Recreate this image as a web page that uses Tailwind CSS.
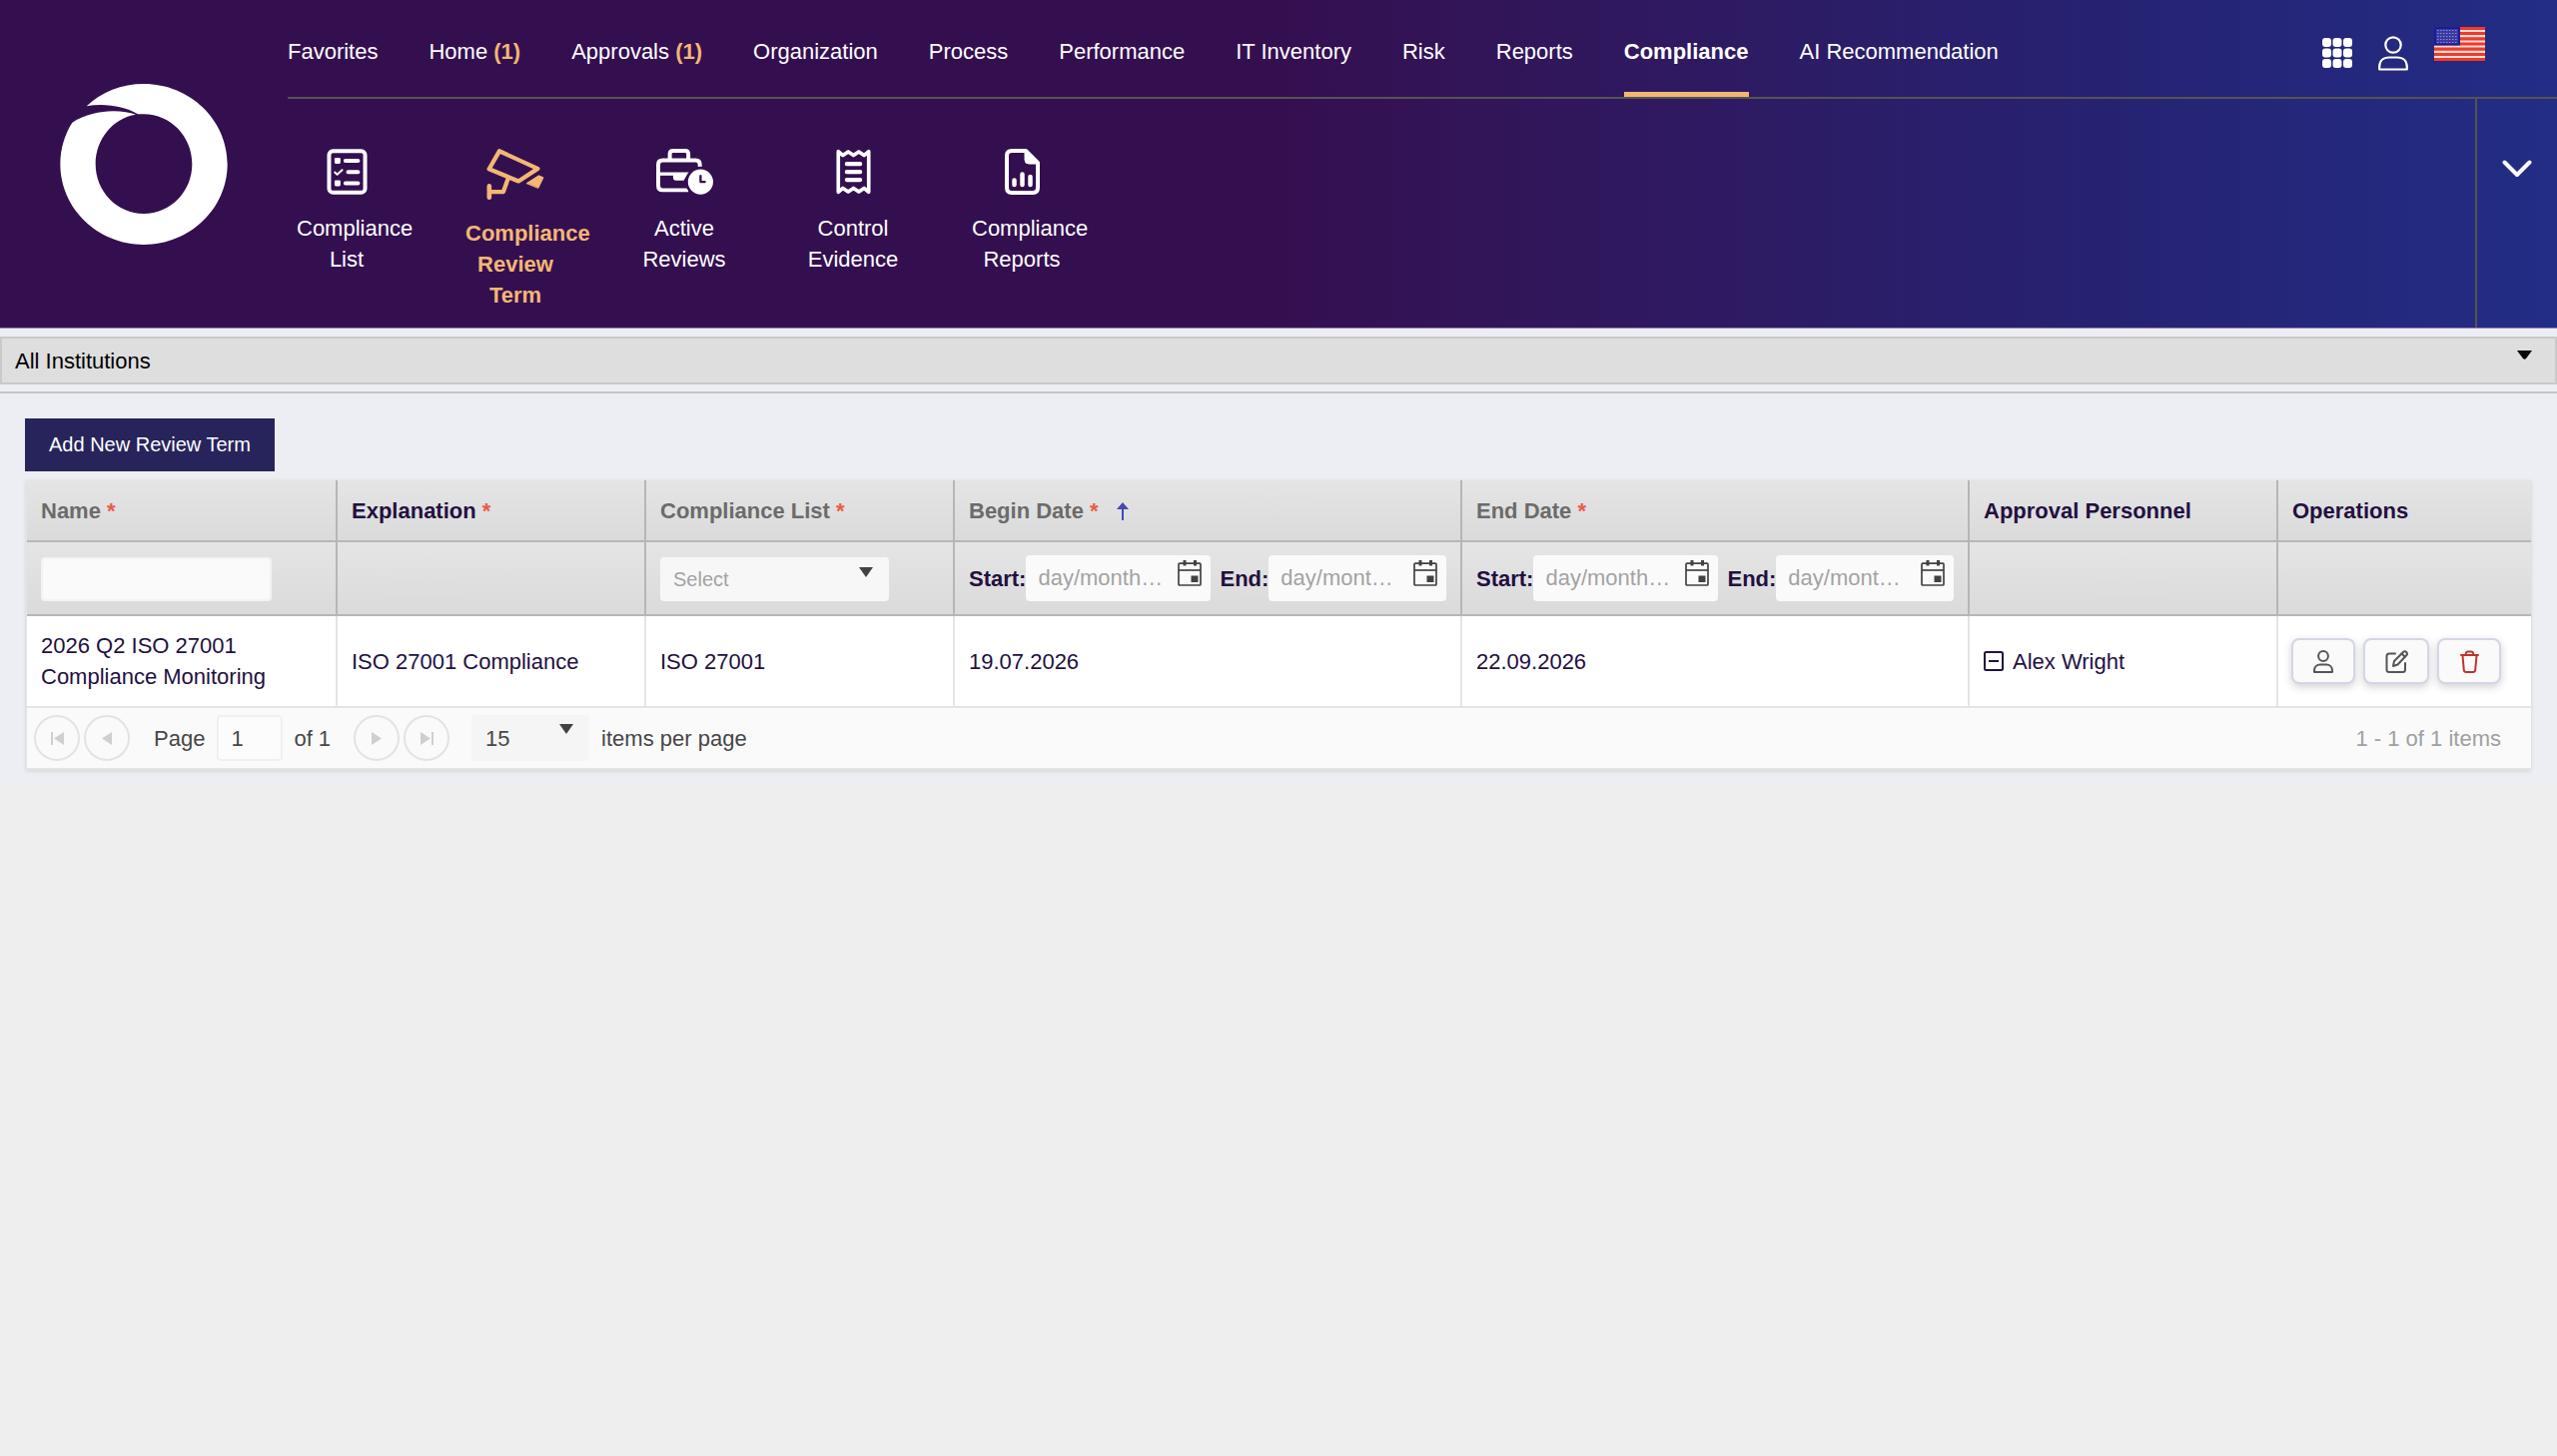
<!DOCTYPE html>
<html lang="en">
  <head>
    <meta charset="UTF-8" />
    <meta name="viewport" content="width=device-width, initial-scale=1.0" />
    <title>Compliance Review Term</title>
    <script src="https://cdn.jsdelivr.net/npm/@tailwindcss/browser@4"></script>
  </head>
  <body class="min-h-screen bg-[#eeeeee] font-['Liberation_Sans',Arial,sans-serif] text-[22px] leading-[31px] text-[#23103f]">
    <!-- Header -->
    <header class="flex border-b border-[#9583b5] bg-linear-to-r from-[#340f50] from-50% via-[#262272] via-82% to-[#222d85] text-white">
      <a href="#" aria-label="Dashboard" class="flex w-72 shrink-0 items-center justify-center">
        <svg class="h-[161px] w-[168px]" viewBox="31 26 502 483" fill="#fff">
          <path d="M110 93C155 50 215 26 282 26C420 26 533 134 533 267C533 401 420 509 282 509C144 509 31 401 31 267C31 222 44 178 67 142C105 118 150 108 190 108C218 108 240 112 258 118C190 128 137 192 137 267C137 350 202 416 282 416C362 416 427 350 427 267C427 184 362 117 282 117L264 117C225 94 165 83 110 93Z" />
        </svg>
      </a>
      <div class="min-w-0 grow">
        <!-- Top navigation -->
        <div class="flex h-[99px] justify-between border-b-2 border-[#55544f]">
          <nav class="flex gap-[51px] whitespace-nowrap">
            <a href="#" class="pt-9">Favorites</a>
            <a href="#" class="pt-9">Home <b class="text-[#f3b774]">(1)</b></a>
            <a href="#" class="pt-9">Approvals <b class="text-[#f3b774]">(1)</b></a>
            <a href="#" class="pt-9">Organization</a>
            <a href="#" class="pt-9">Process</a>
            <a href="#" class="pt-9">Performance</a>
            <a href="#" class="pt-9">IT Inventory</a>
            <a href="#" class="pt-9">Risk</a>
            <a href="#" class="pt-9">Reports</a>
            <a href="#" class="border-b-5 border-[#f3b774] pt-9 font-bold">Compliance</a>
            <a href="#" class="pt-9">AI Recommendation</a>
          </nav>
          <div class="flex items-start gap-[26px] pt-[27px] pr-[72px]">
            <button type="button" aria-label="Applications" class="mt-[11px]">
              <svg class="size-[30px]" viewBox="0 0 30 30" fill="#fff">
                <rect x="0" y="0" width="9" height="9" rx="3" />
                <rect x="10.500" y="0" width="9" height="9" rx="3" />
                <rect x="21" y="0" width="9" height="9" rx="3" />
                <rect x="0" y="10.500" width="9" height="9" rx="3" />
                <rect x="10.500" y="10.500" width="9" height="9" rx="3" />
                <rect x="21" y="10.500" width="9" height="9" rx="3" />
                <rect x="0" y="21" width="9" height="9" rx="3" />
                <rect x="10.500" y="21" width="9" height="9" rx="3" />
                <rect x="21" y="21" width="9" height="9" rx="3" />
              </svg>
            </button>
            <button type="button" aria-label="Profile" class="mt-[9px]">
              <svg class="h-[35px] w-[30px]" viewBox="0 0 30 35" fill="none" stroke="#fff" stroke-width="2.2">
                <circle cx="15" cy="9" r="7.700" />
                <path d="M1.200 33.500V31C1.200 25 5 21.500 11 21.500H19C25 21.500 28.800 25 28.800 31V33.500Z" stroke-linejoin="round" />
              </svg>
            </button>
            <button type="button" aria-label="Language">
              <svg class="h-[34px] w-[51px]" viewBox="0 0 51 34">
                <rect width="51" height="34" fill="#fbdcd6" />
                <path d="M0 1.300H51M0 6.500H51M0 11.800H51M0 17H51M0 22.200H51M0 27.500H51M0 32.700H51" stroke="#ee3a2b" stroke-width="3.200" />
                <rect width="26" height="18.500" fill="#1c1c96" />
                <rect x="2" y="2" width="22" height="14.500" fill="#3a3aa4" />
                <path d="M3 3.500H24M3 6.500H24M3 9.500H24M3 12.500H24M3 15.500H24" stroke="#8a8acd" stroke-width="1.200" stroke-dasharray="1.500 1.500" />
              </svg>
            </button>
          </div>
        </div>
        <!-- Module menu -->
        <div class="flex">
          <nav class="flex grow gap-[69px] pt-[50px] pb-[17px] pl-[9px] text-center">
            <a href="#" class="flex w-[100px] flex-col items-center gap-[18px]">
              <svg class="h-[46px] w-[41px]" viewBox="140 57 122 139" fill="none" stroke="#fff" stroke-linecap="round" stroke-linejoin="round">
                <rect x="146.500" y="63.500" width="109" height="126" rx="12" stroke-width="12" />
                <path d="M196 93H234M204 127H234M196 161H234" stroke-width="12" />
                <path d="M164 128L171 135L186 121" stroke-width="6" />
                <rect x="163" y="84" width="18" height="18" rx="4" fill="#fff" stroke="none" />
                <rect x="163" y="152" width="18" height="18" rx="4" fill="#fff" stroke="none" />
              </svg>
              <span class="w-full text-left"><span class="block">Compliance</span><span class="block text-center">List</span></span>
            </a>
            <a href="#" class="flex w-[100px] flex-col items-center gap-[18px] font-bold text-[#f3b774]">
              <svg class="h-[51px] w-[58px]" viewBox="623 57 173 154" fill="none" stroke="#f3b774" stroke-linecap="round" stroke-linejoin="round">
                <path d="M661 64L777 117L719 155L630 118Z" stroke-width="13" />
                <path d="M687 148L673 187H632" stroke-width="13" />
                <path d="M630.500 170V204" stroke-width="14" />
                <path d="M744 161L780 138L794 144L779 175Z" fill="#f3b774" stroke-width="3" />
              </svg>
              <span class="w-full text-left"><span class="block">Compliance</span><span class="block text-center">Review<br />Term</span></span>
            </a>
            <a href="#" class="flex w-[100px] flex-col items-center gap-[18px]">
              <svg class="h-[46px] w-[57px]" viewBox="231 57 172 139" fill="none" stroke="#fff">
                <path d="M328 182H250Q237 182 237 169V105Q237 92 250 92H350Q363 92 363 105V112" stroke-width="12" />
                <path d="M272 92V73Q272 63 282 63H318Q328 63 328 73V92" stroke-width="12" />
                <path d="M237 133H330" stroke-width="10" />
                <path d="M282 134H325L314 153H291Q282 153 282 145Z" fill="#fff" stroke="none" />
                <circle cx="365" cy="157" r="42" fill="#fff" stroke="#340f50" stroke-width="8" />
                <path d="M365 139V157H378" stroke="#340f50" stroke-width="7" stroke-linecap="round" stroke-linejoin="round" />
              </svg>
              <span>Active<br />Reviews</span>
            </a>
            <a href="#" class="flex w-[100px] flex-col items-center gap-[18px]">
              <svg class="h-[46px] w-[35px]" viewBox="773 57 104 139" fill="none" stroke="#fff" stroke-linecap="round" stroke-linejoin="round">
                <path d="M779 65L793 77L809 66L825 77L841 66L857 77L871 65V188L857 176L841 187L825 176L809 187L793 176L779 188Z" stroke-width="11" />
                <path d="M805 103H845M805 127H845M805 151H845" stroke-width="13" />
              </svg>
              <span>Control<br />Evidence</span>
            </a>
            <a href="#" class="flex w-[100px] flex-col items-center gap-[18px]">
              <svg class="h-[46px] w-[35px]" viewBox="0 0 35 46" fill="none" stroke="#fff" stroke-linecap="round" stroke-linejoin="round">
                <path d="M7 2H21L33 14V39Q33 44 28 44H7Q2 44 2 39V7Q2 2 7 2Z" stroke-width="4" />
                <path d="M20 2V11Q20 15 24 15H33L21 2Z" fill="#fff" />
                <path d="M9.500 31.500V36M17.500 25.500V36M25.500 28V36" stroke-width="4.500" />
              </svg>
              <span class="w-full text-left"><span class="block">Compliance</span><span class="block text-center">Reports</span></span>
            </a>
          </nav>
          <button type="button" aria-label="Expand menu" class="flex w-[82px] shrink-0 justify-center border-l-2 border-[#55544f] pt-[60px]">
            <svg class="h-[19px] w-[30px]" viewBox="0 0 30 19" fill="none" stroke="#fff" stroke-width="4" stroke-linecap="round" stroke-linejoin="round">
              <path d="M2.500 3.500L15 16L27.500 3.500" />
            </svg>
          </button>
        </div>
      </div>
    </header>

    <main class="bg-[#edeef3] pt-2 pb-4">
      <!-- Institution filter -->
      <div class="border-b-2 border-[#c4c4c6] pb-[7px]">
        <div class="relative">
          <select aria-label="Institution" class="block h-12 w-full appearance-none border-2 border-[#c9c9c9] bg-[#dedede] px-[13px] text-black">
            <option>All Institutions</option>
          </select>
          <svg class="pointer-events-none absolute top-[14px] right-[25px] h-[9px] w-[15px]" viewBox="0 0 15 9"><path d="M0 0H15L9 8Q7.500 9.500 6 8Z" /></svg>
        </div>
      </div>

      <div class="px-[25px] pt-[25px]">
        <button type="button" class="h-[53px] bg-[#27245b] px-6 text-[20px] text-white">Add New Review Term</button>

        <!-- Review term grid -->
        <div class="mt-[9px] mr-px ml-px border-l border-[#e4e4e4] shadow-[0_1px_4px_rgba(0,0,0,0.12)]">
          <table class="w-full table-fixed border-separate border-spacing-0 bg-white text-left">
            <colgroup>
              <col class="w-[311px]" />
              <col class="w-[309px]" />
              <col class="w-[309px]" />
              <col class="w-[508px]" />
              <col class="w-[508px]" />
              <col class="w-[309px]" />
              <col />
            </colgroup>
            <thead>
              <tr class="bg-linear-to-b from-[#e5e5e5] to-[#dadada]">
                <th class="border-r-2 border-b-2 border-[#b6b6b6] px-[14px] pt-[15px] pb-[14px] text-[#6b6b6b]">Name <span class="text-[#ea5a47]">*</span></th>
                <th class="border-r-2 border-b-2 border-[#b6b6b6] px-[14px] pt-[15px] pb-[14px]">Explanation <span class="text-[#ea5a47]">*</span></th>
                <th class="border-r-2 border-b-2 border-[#b6b6b6] px-[14px] pt-[15px] pb-[14px] text-[#6b6b6b]">Compliance List <span class="text-[#ea5a47]">*</span></th>
                <th class="border-r-2 border-b-2 border-[#b6b6b6] px-[14px] pt-[15px] pb-[14px] text-[#6b6b6b]">
                  <div class="flex items-center gap-[18px]">
                    <span>Begin Date <span class="text-[#ea5a47]">*</span></span>
                    <svg class="h-[18px] w-[12px]" viewBox="0 0 12 18" fill="#4649b0"><path d="M6 0L12 7H7V18H5V7H0Z" /></svg>
                  </div>
                </th>
                <th class="border-r-2 border-b-2 border-[#b6b6b6] px-[14px] pt-[15px] pb-[14px] text-[#6b6b6b]">End Date <span class="text-[#ea5a47]">*</span></th>
                <th class="border-r-2 border-b-2 border-[#b6b6b6] px-[14px] pt-[15px] pb-[14px]">Approval Personnel</th>
                <th class="border-b-2 border-[#b6b6b6] px-[14px] pt-[15px] pb-[14px]">Operations</th>
              </tr>
              <tr class="bg-linear-to-b from-[#e5e5e5] to-[#dadada]">
                <td class="border-r-2 border-b-2 border-[#b6b6b6] px-[14px] py-[13px] align-bottom">
                  <input type="text" aria-label="Name" class="block h-11 w-[231px] rounded-sm border-2 border-[#f3f3f3] bg-[#fafafa] px-3" />
                </td>
                <td class="border-r-2 border-b-2 border-[#b6b6b6]"></td>
                <td class="border-r-2 border-b-2 border-[#b6b6b6] px-[14px] py-[13px] align-bottom">
                  <div class="relative w-[229px]">
                    <select aria-label="Compliance list" class="block h-11 w-full appearance-none rounded-sm bg-[#f7f7f7] px-[13px] text-[20px] text-[#a3a3a3]">
                      <option>Select</option>
                    </select>
                    <svg class="pointer-events-none absolute top-[10px] right-4 h-[10px] w-[14px]" viewBox="0 0 14 10" fill="#424242"><path d="M0 0H14L7 10Z" /></svg>
                  </div>
                </td>
                <td class="border-r-2 border-b-2 border-[#b6b6b6] px-[14px] py-[13px] align-bottom">
                  <div class="flex items-center">
                    <label for="beginStart" class="font-bold">Start:</label>
                    <div class="relative mr-[9px] w-[185px] shrink-0">
                      <input id="beginStart" type="text" placeholder="day/month…" class="block h-[46px] w-full rounded-sm bg-[#fafafa] pr-11 pl-3 placeholder:text-[#a3a3a3]" />
                      <svg class="pointer-events-none absolute top-[5px] right-[9px] h-[26px] w-6" viewBox="0 0 24 26" fill="none" stroke="#424242" stroke-width="1.700"><rect x="1" y="3.200" width="22" height="21.800" rx="1" /><path d="M1 10H23" /><path d="M7 0V5.500M17.500 0V5.500" stroke-width="3" /><rect x="13.500" y="15.500" width="7" height="6.500" fill="#424242" stroke="none" /></svg>
                    </div>
                    <label for="beginEnd" class="font-bold">End:</label>
                    <div class="relative min-w-0 flex-1">
                      <input id="beginEnd" type="text" placeholder="day/mont…" class="block h-[46px] w-full rounded-sm bg-[#fafafa] pr-11 pl-3 placeholder:text-[#a3a3a3]" />
                      <svg class="pointer-events-none absolute top-[5px] right-[9px] h-[26px] w-6" viewBox="0 0 24 26" fill="none" stroke="#424242" stroke-width="1.700"><rect x="1" y="3.200" width="22" height="21.800" rx="1" /><path d="M1 10H23" /><path d="M7 0V5.500M17.500 0V5.500" stroke-width="3" /><rect x="13.500" y="15.500" width="7" height="6.500" fill="#424242" stroke="none" /></svg>
                    </div>
                  </div>
                </td>
                <td class="border-r-2 border-b-2 border-[#b6b6b6] px-[14px] py-[13px] align-bottom">
                  <div class="flex items-center">
                    <label for="endStart" class="font-bold">Start:</label>
                    <div class="relative mr-[9px] w-[185px] shrink-0">
                      <input id="endStart" type="text" placeholder="day/month…" class="block h-[46px] w-full rounded-sm bg-[#fafafa] pr-11 pl-3 placeholder:text-[#a3a3a3]" />
                      <svg class="pointer-events-none absolute top-[5px] right-[9px] h-[26px] w-6" viewBox="0 0 24 26" fill="none" stroke="#424242" stroke-width="1.700"><rect x="1" y="3.200" width="22" height="21.800" rx="1" /><path d="M1 10H23" /><path d="M7 0V5.500M17.500 0V5.500" stroke-width="3" /><rect x="13.500" y="15.500" width="7" height="6.500" fill="#424242" stroke="none" /></svg>
                    </div>
                    <label for="endEnd" class="font-bold">End:</label>
                    <div class="relative min-w-0 flex-1">
                      <input id="endEnd" type="text" placeholder="day/mont…" class="block h-[46px] w-full rounded-sm bg-[#fafafa] pr-11 pl-3 placeholder:text-[#a3a3a3]" />
                      <svg class="pointer-events-none absolute top-[5px] right-[9px] h-[26px] w-6" viewBox="0 0 24 26" fill="none" stroke="#424242" stroke-width="1.700"><rect x="1" y="3.200" width="22" height="21.800" rx="1" /><path d="M1 10H23" /><path d="M7 0V5.500M17.500 0V5.500" stroke-width="3" /><rect x="13.500" y="15.500" width="7" height="6.500" fill="#424242" stroke="none" /></svg>
                    </div>
                  </div>
                </td>
                <td class="border-r-2 border-b-2 border-[#b6b6b6]"></td>
                <td class="border-b-2 border-[#b6b6b6]"></td>
              </tr>
            </thead>
            <tbody>
              <tr>
                <td class="border-r-2 border-b-2 border-[#e4e4e4] px-[14px] py-[14px]">2026 Q2 ISO 27001 Compliance Monitoring</td>
                <td class="border-r-2 border-b-2 border-[#e4e4e4] px-[14px]">ISO 27001 Compliance</td>
                <td class="border-r-2 border-b-2 border-[#e4e4e4] px-[14px]">ISO 27001</td>
                <td class="border-r-2 border-b-2 border-[#e4e4e4] px-[14px]">19.07.2026</td>
                <td class="border-r-2 border-b-2 border-[#e4e4e4] px-[14px]">22.09.2026</td>
                <td class="border-r-2 border-b-2 border-[#e4e4e4] px-[14px]">
                  <div class="flex items-center gap-[9px]">
                    <svg class="size-5" viewBox="0 0 20 20" fill="none" stroke="#23103f" stroke-width="2"><rect x="1" y="1" width="18" height="18" rx="1.500" /><path d="M5 10H15" /></svg>
                    <span>Alex Wright</span>
                  </div>
                </td>
                <td class="border-b-2 border-[#e4e4e4] px-[13px]">
                  <div class="flex gap-2">
                    <button type="button" aria-label="Personnel" class="flex h-[46px] w-16 items-center justify-center rounded-lg border-2 border-[#d3d6e6] bg-[#fafafa] shadow-[0_3px_9px_rgba(0,0,0,0.18)]">
                      <svg class="h-[23px] w-5" viewBox="0 0 20 23" fill="none" stroke="#555" stroke-width="2" stroke-linejoin="round"><circle cx="10" cy="6" r="4.900" /><path d="M1 22V20.500C1 17 3.500 14.500 7 14.500H13C16.500 14.500 19 17 19 20.500V22Z" /></svg>
                    </button>
                    <button type="button" aria-label="Edit" class="flex h-[46px] w-[66px] items-center justify-center rounded-lg border-2 border-[#d3d6e6] bg-[#fafafa] shadow-[0_3px_9px_rgba(0,0,0,0.18)]">
                      <svg class="h-[23px] w-[23px]" viewBox="0 0 23 23" fill="none" stroke="#555" stroke-width="2" stroke-linecap="round" stroke-linejoin="round"><path d="M10 3.500H4Q1.500 3.500 1.500 6V19.500Q1.500 22 4 22H17.500Q20 22 20 19.500V13" /><path d="M8 16L9 11L18 2Q19.500 .500 21.200 2Q22.700 3.700 21.200 5.200L12.500 14.500Z" /><path d="M16.500 3.500L19.800 6.800" /></svg>
                    </button>
                    <button type="button" aria-label="Delete" class="flex h-[46px] w-16 items-center justify-center rounded-lg border-2 border-[#d3d6e6] bg-[#fafafa] shadow-[0_3px_9px_rgba(0,0,0,0.18)]">
                      <svg class="h-[23px] w-[19px]" viewBox="0 0 19 23" fill="none" stroke="#c0322e" stroke-width="2" stroke-linecap="round" stroke-linejoin="round"><path d="M1 5H18M5.500 4.500Q5.800 1.500 8 1.500H11Q13.200 1.500 13.500 4.500M2.500 5.500L3.800 20Q4 22 6 22H13Q15 22 15.200 20L16.500 5.500" /></svg>
                    </button>
                  </div>
                </td>
              </tr>
            </tbody>
          </table>

          <!-- Pager -->
          <div class="flex h-[62px] items-center border-b-2 border-[#e4e4e4] bg-[#fafafa] pr-[30px] pl-[7px] text-[#474747]">
            <button type="button" aria-label="First page" class="mr-1 flex size-[46px] items-center justify-center rounded-full border-2 border-[#e3e3e3]">
              <svg class="h-[13px] w-[13px]" viewBox="0 0 13 13" fill="#cfcfcf"><path d="M0 0H2V13H0ZM13 0V13L3 6.500Z" /></svg>
            </button>
            <button type="button" aria-label="Previous page" class="flex size-[46px] items-center justify-center rounded-full border-2 border-[#e3e3e3]">
              <svg class="h-[13px] w-[10px]" viewBox="0 0 10 13" fill="#cfcfcf"><path d="M10 0V13L0 6.500Z" /></svg>
            </button>
            <label for="pageNumber" class="mr-3 ml-6">Page</label>
            <input id="pageNumber" type="text" value="1" class="h-[46px] w-[66px] rounded-sm border-2 border-[#f0f0f0] bg-[#fcfcfc] pt-px pr-0 pl-3" />
            <span class="ml-[11px]">of 1</span>
            <button type="button" aria-label="Next page" class="mr-1 ml-[23px] flex size-[46px] items-center justify-center rounded-full border-2 border-[#e3e3e3]">
              <svg class="h-[13px] w-[10px]" viewBox="0 0 10 13" fill="#cfcfcf"><path d="M0 0V13L10 6.500Z" /></svg>
            </button>
            <button type="button" aria-label="Last page" class="flex size-[46px] items-center justify-center rounded-full border-2 border-[#e3e3e3]">
              <svg class="h-[13px] w-[13px]" viewBox="0 0 13 13" fill="#cfcfcf"><path d="M11 0H13V13H11ZM0 0V13L10 6.500Z" /></svg>
            </button>
            <div class="relative mr-3 ml-[22px] w-[118px]">
              <select id="pageSize" class="block h-[46px] w-full appearance-none rounded-sm bg-[#f5f5f5] px-[14px]">
                <option>15</option>
              </select>
              <svg class="pointer-events-none absolute top-[9px] right-4 h-[10px] w-[14px]" viewBox="0 0 14 10" fill="#424242"><path d="M0 0H14L7 10Z" /></svg>
            </div>
            <label for="pageSize">items per page</label>
            <span class="ml-auto text-[#a0a0a0]">1 - 1 of 1 items</span>
          </div>
        </div>
      </div>
    </main>
  </body>
</html>
